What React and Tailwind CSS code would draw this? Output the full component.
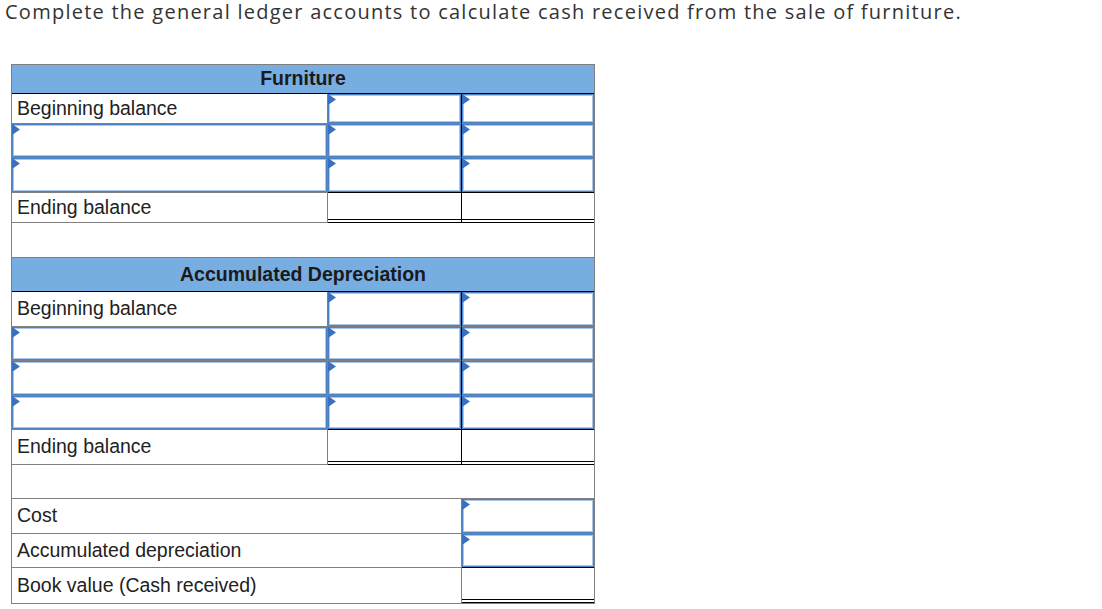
import React from "react";

function Tri() {
  return (
    <svg className="absolute left-[-1px] top-[-1px]" width="8" height="11" viewBox="0 0 8 11">
      <polygon points="0,0 8,5.5 0,11" fill="#3a70c0" />
    </svg>
  );
}

function Input() {
  return (
    <div className="relative h-full w-full border border-[#4f82c0] shadow-[inset_0_0_0_1px_#a9c7ec]">
      <Tri />
    </div>
  );
}

function Label({ text, wide, bb = "border-b border-b-[#808080]" }) {
  return (
    <div
      className={
        (wide ? "w-[450px] " : "w-[316px] ") +
        "flex items-center border-r border-r-[#808080] pl-[5px] text-[19.5px] text-[#222] " +
        bb
      }
    >
      {text}
    </div>
  );
}

function Col1Input() {
  return (
    <div className="w-[316px] border-r border-b border-[#808080]">
      <Input />
    </div>
  );
}

function Col2Input({ black }) {
  return (
    <div
      className={
        "w-[134px] border-r border-r-black border-b " +
        (black ? "border-b-black" : "border-b-[#808080]")
      }
    >
      <Input />
    </div>
  );
}

function Col3Input({ black }) {
  return (
    <div className={"flex-1 border-b " + (black ? "border-b-black" : "border-b-[#808080]")}>
      <Input />
    </div>
  );
}

function EndCell({ col2 }) {
  return (
    <div className={(col2 ? "w-[134px] border-r border-r-black " : "flex-1 ") + "flex flex-col"}>
      <div className="flex-1" />
      <div className="h-[4px] border-y border-black" />
    </div>
  );
}

function Header({ text, h }) {
  return (
    <div
      className={
        h +
        " flex items-center justify-center border-b border-b-black bg-[#78ade2] text-[19.5px] font-bold text-[#1a1a1a]"
      }
    >
      {text}
    </div>
  );
}

function Spacer({ h }) {
  return <div className={h + " border-b border-b-[#808080]"} />;
}

export default function App() {
  return (
    <div
      className="h-[609px] w-[1102px] bg-white"
      style={{ fontFamily: '"Liberation Sans", Arial, sans-serif' }}
    >
      <div
        className="pl-[5px] text-[20px] leading-[24px] tracking-[1.25px] text-[#333]"
        style={{ fontFamily: '"Open Sans", sans-serif' }}
      >
        Complete the general ledger accounts to calculate cash received from the sale of furniture.
      </div>
      <div className="ml-[11px] mt-[40px] w-[584px] border border-[#808080]">
        <Header text="Furniture" h="h-[29px]" />
        <div className="flex h-[30px]">
          <Label text="Beginning balance" />
          <Col2Input />
          <Col3Input />
        </div>
        <div className="flex h-[34px]">
          <Col1Input />
          <Col2Input />
          <Col3Input />
        </div>
        <div className="flex h-[35px]">
          <Col1Input />
          <Col2Input black />
          <Col3Input black />
        </div>
        <div className="flex h-[30px]">
          <Label text="Ending balance" />
          <EndCell col2 />
          <EndCell />
        </div>
        <Spacer h="h-[35px]" />

        <Header text="Accumulated Depreciation" h="h-[34px]" />
        <div className="flex h-[35px]">
          <Label text="Beginning balance" />
          <Col2Input />
          <Col3Input />
        </div>
        <div className="flex h-[34px]">
          <Col1Input />
          <Col2Input />
          <Col3Input />
        </div>
        <div className="flex h-[35px]">
          <Col1Input />
          <Col2Input />
          <Col3Input />
        </div>
        <div className="flex h-[34px]">
          <Col1Input />
          <Col2Input black />
          <Col3Input black />
        </div>
        <div className="flex h-[35px]">
          <Label text="Ending balance" />
          <EndCell col2 />
          <EndCell />
        </div>
        <Spacer h="h-[34px]" />

        <div className="flex h-[35px]">
          <Label text="Cost" wide />
          <Col3Input />
        </div>
        <div className="flex h-[34px]">
          <Label text="Accumulated depreciation" wide />
          <Col3Input black />
        </div>
        <div className="flex h-[35px]">
          <Label text="Book value (Cash received)" wide bb="" />
          <EndCell />
        </div>
      </div>
    </div>
  );
}
